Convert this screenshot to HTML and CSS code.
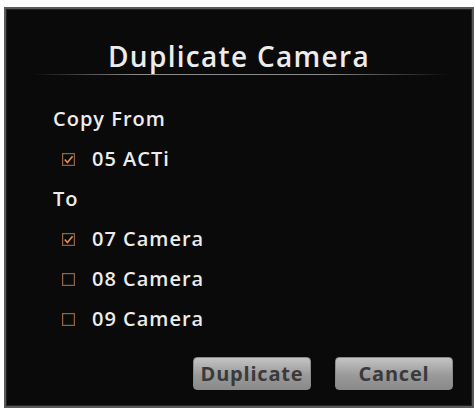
FILE: index.html
```html
<!DOCTYPE html>
<html lang="en">
<head>
  <meta charset="UTF-8">
  <title>Duplicate Camera</title>
  <link rel="stylesheet" href="styles.css">
</head>
<body>
  <div class="dialog">
    <h1 class="title">Duplicate Camera</h1>
    <div class="rule"></div>

    <div class="section">
      <div class="label">Copy From</div>
      <div class="item">
        <svg class="box" viewBox="0 0 14 14"><rect x="1.5" y="1.5" width="11" height="11" /><path class="tick" d="M3.5 7 L6 9.8 L10.8 4" /></svg>
        <span>05 ACTi</span>
      </div>
      <div class="label">To</div>
      <div class="item">
        <svg class="box" viewBox="0 0 14 14"><rect x="1.5" y="1.5" width="11" height="11" /><path class="tick" d="M3.5 7 L6 9.8 L10.8 4" /></svg>
        <span>07 Camera</span>
      </div>
      <div class="item">
        <svg class="box" viewBox="0 0 14 14"><rect x="1.5" y="1.5" width="11" height="11" /></svg>
        <span>08 Camera</span>
      </div>
      <div class="item">
        <svg class="box" viewBox="0 0 14 14"><rect x="1.5" y="1.5" width="11" height="11" /></svg>
        <span>09 Camera</span>
      </div>
    </div>

    <div class="actions">
      <button class="btn">Duplicate</button>
      <button class="btn">Cancel</button>
    </div>
  </div>
</body>
</html>
```

FILE: styles.css
```css
body {
  margin: 0;
  background: #fff;
  font-family: "Open Sans", "DejaVu Sans", sans-serif;
}

.dialog {
  box-sizing: border-box;
  width: 470px;
  height: 401px;
  margin: 7px 0 0 4px;
  background: #0a0a0a;
  border: 2px solid #5a5a5a;
  box-shadow: inset 0 0 0 1px #222;
  color: #ececec;
  position: relative;
}

.title {
  margin: 0;
  padding-top: 30px;
  text-align: center;
  font-size: 28px;
  font-weight: 600;
  line-height: 34px;
  letter-spacing: 1.3px;
}

.rule {
  height: 1px;
  margin: 1px 22px 0 26px;
  background: linear-gradient(90deg, rgba(120,120,120,0) 0%, #8a8a8a 25%, #8a8a8a 70%, rgba(120,120,120,0) 100%);
}

.section {
  padding: 24px 0 0 47px;
}

.label,
.item {
  height: 40px;
  line-height: 40px;
  font-size: 20px;
  font-weight: 600;
  letter-spacing: 1px;
}

.item {
  display: flex;
  align-items: center;
  gap: 16px;
  margin-left: 8px;
}

.box {
  width: 15px;
  height: 15px;
  flex: none;
}

.box rect {
  fill: none;
  stroke: #8c6246;
  stroke-width: 1.2;
}

.tick {
  fill: none;
  stroke: #e08a48;
  stroke-width: 1.6;
}

.actions {
  position: absolute;
  right: 19px;
  bottom: 16px;
  display: flex;
  gap: 24px;
}

.btn {
  width: 118px;
  height: 33px;
  border: 1px solid #8a8a8a;
  border-radius: 4px;
  background: linear-gradient(#c4c4c4, #9a9a9a 55%, #8a8a8a);
  color: #3a3a3a;
  font-family: "Open Sans", "DejaVu Sans", sans-serif;
  font-size: 20px;
  font-weight: 700;
  letter-spacing: 0.8px;
  padding: 0;
}
```
